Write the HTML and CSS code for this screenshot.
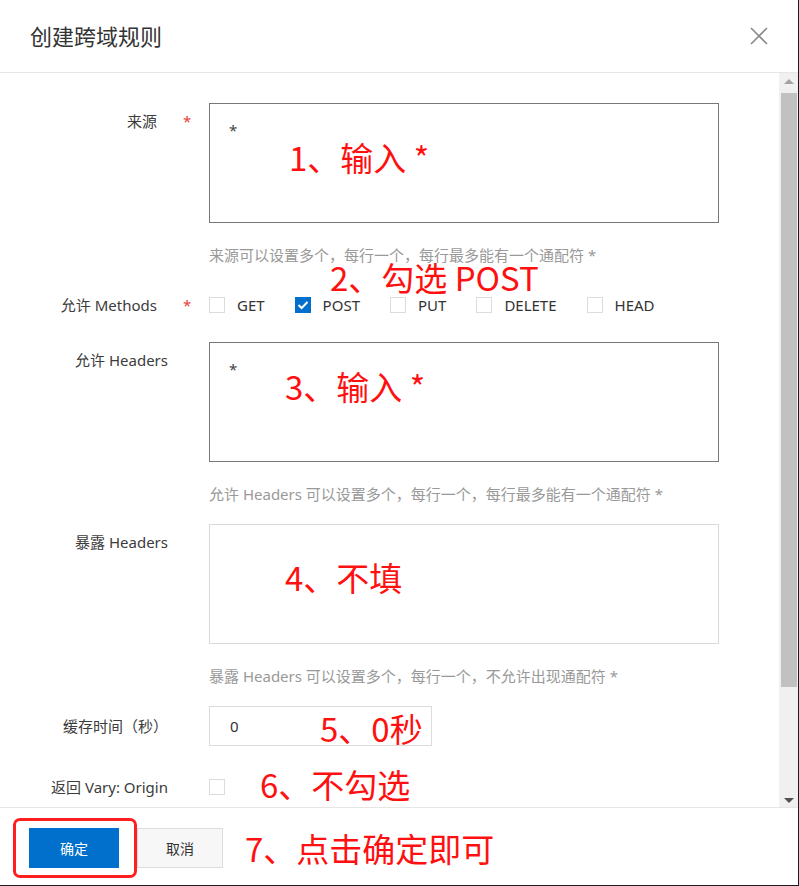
FILE: index.html
```html
<!DOCTYPE html>
<html lang="zh-CN">
<head>
<meta charset="utf-8">
<title>创建跨域规则</title>
<link rel="stylesheet" href="styles.css">
</head>
<body>
<div class="dialog">
  <header class="dlg-head">
    <h1 class="dlg-title">创建跨域规则</h1>
    <button class="dlg-close" aria-label="关闭">
      <svg width="18" height="18" viewBox="0 0 18 18"><path d="M1 1 L17 17 M17 1 L1 17" stroke="#8a8a8a" stroke-width="1.6" fill="none"/></svg>
    </button>
  </header>

  <div class="dlg-body">
    <div class="form">
      <div class="row row-area">
        <div class="label req">来源</div>
        <div class="star">*</div>
        <div class="area area-dark">*</div>
      </div>
      <div class="hint hint-1">来源可以设置多个，每行一个，每行最多能有一个通配符 *</div>

      <div class="row row-check row-methods">
        <div class="label req">允许 Methods</div>
        <div class="star">*</div>
        <div class="checks">
          <label class="check"><span class="box"></span><span>GET</span></label>
          <label class="check"><span class="box checked"><svg width="12" height="10" viewBox="0 0 12 10"><path d="M1.5 5 L4.6 8 L10.5 2" stroke="#fff" stroke-width="2" fill="none"/></svg></span><span>POST</span></label>
          <label class="check"><span class="box"></span><span>PUT</span></label>
          <label class="check"><span class="box"></span><span>DELETE</span></label>
          <label class="check"><span class="box"></span><span>HEAD</span></label>
        </div>
      </div>

      <div class="row row-area row-headers">
        <div class="label">允许 Headers</div>
        <div class="star"></div>
        <div class="area area-dark">*</div>
      </div>
      <div class="hint">允许 Headers 可以设置多个，每行一个，每行最多能有一个通配符 *</div>

      <div class="row row-area row-expose">
        <div class="label">暴露 Headers</div>
        <div class="star"></div>
        <div class="area area-light"></div>
      </div>
      <div class="hint">暴露 Headers 可以设置多个，每行一个，不允许出现通配符 *</div>

      <div class="row row-input">
        <div class="label">缓存时间（秒）</div>
        <div class="star"></div>
        <div class="input">0</div>
      </div>

      <div class="row row-check row-vary">
        <div class="label">返回 Vary: Origin</div>
        <div class="star"></div>
        <span class="box"></span>
      </div>
    </div>

    <div class="scrollbar">
      <div class="sb-btn"><span class="tri-up"></span></div>
      <div class="sb-thumb"></div>
      <div class="sb-space"></div>
      <div class="sb-btn"><span class="tri-down"></span></div>
    </div>
  </div>

  <footer class="dlg-foot">
    <button class="btn btn-primary">确定</button>
    <button class="btn btn-normal">取消</button>
  </footer>

  <div class="mark mark-frame"></div>
  <div class="note n1">1、输入 *</div>
  <div class="note n2">2、勾选 POST</div>
  <div class="note n3">3、输入 *</div>
  <div class="note n4">4、不填</div>
  <div class="note n5">5、0秒</div>
  <div class="note n6">6、不勾选</div>
  <div class="note n7">7、点击确定即可</div>
</div>
</body>
</html>
```

FILE: styles.css
```css
* { box-sizing: border-box; }
html, body { margin: 0; padding: 0; background: #fff; }
body {
  font-family: "Noto Sans", "Noto Sans CJK SC", sans-serif;
  font-size: 15px;
  color: #333;
}
.dialog {
  position: relative;
  width: 799px;
  height: 886px;
  border-right: 1px solid #1c1c1c;
  border-bottom: 1px solid #1c1c1c;
  display: flex;
  flex-direction: column;
  overflow: hidden;
}
.dialog::after {
  content: "";
  position: absolute;
  right: -1px;
  top: 0;
  width: 1px;
  height: 26px;
  background: #c98a2e;
}
.dlg-head {
  height: 73px;
  flex: none;
  border-bottom: 1px solid #e6e6e6;
  display: flex;
  align-items: center;
  justify-content: space-between;
  padding: 0 30px 0 30px;
}
.dlg-title {
  margin: 0;
  font-size: 22px;
  font-weight: normal;
  color: #333;
  font-family: "Noto Sans CJK SC", sans-serif;
  line-height: 28px;
  margin-top: -2px;
}
.dlg-close {
  border: 0;
  background: none;
  padding: 0;
  width: 18px;
  height: 18px;
  margin-top: -1px;
  display: flex;
}
.dlg-body {
  flex: 1;
  display: flex;
  min-height: 0;
}
.form {
  flex: 1;
  padding-top: 30px;
}
.row { display: flex; }
.label {
  width: 168px;
  text-align: right;
  line-height: 20px;
  color: #3c3c3c;
  white-space: nowrap;
}
.label.req { padding-right: 11px; }
.star {
  width: 41px;
  padding-left: 15px;
  color: #e8403a;
  line-height: 20px;
}
.row-area .label, .row-area .star { margin-top: 8px; }
.area {
  width: 510px;
  height: 120px;
  border: 1px solid #777;
  padding: 16px 19px;
  line-height: 20px;
  color: #444;
}
.area.area-light { border-color: #d9d9d9; }
.hint {
  margin-left: 209px;
  margin-top: 22px;
  line-height: 20px;
  color: #999;
  white-space: nowrap;
}
.row-methods { margin-top: 30px; align-items: center; height: 20px; }
.row-headers { margin-top: 27px; }
.row-expose { margin-top: 20px; }
.row-input { margin-top: 20px; align-items: center; }
.row-vary { margin-top: 31px; align-items: center; height: 20px; }
.checks { display: flex; align-items: center; }
.check {
  display: flex;
  align-items: center;
  gap: 12px;
  margin-right: 30px;
  line-height: 20px;
  color: #333;
  font-size: 15px;
}
.box {
  width: 16px;
  height: 16px;
  border: 1px solid #dcdcdc;
  background: #fff;
  display: flex;
  align-items: center;
  justify-content: center;
  flex: none;
}
.box.checked { background: #0070cc; border-color: #0070cc; }
.input {
  width: 223px;
  height: 40px;
  border: 1px solid #dcdcdc;
  padding: 0 20px;
  line-height: 38px;
  color: #333;
}
.scrollbar {
  width: 19px;
  flex: none;
  background: #f0f0f0;
  display: flex;
  flex-direction: column;
  align-items: center;
}
.sb-btn {
  height: 17px;
  width: 100%;
  display: flex;
  align-items: center;
  justify-content: center;
}
.tri-up {
  width: 0; height: 0;
  border-left: 5px solid transparent;
  border-right: 5px solid transparent;
  border-bottom: 5px solid #a3a3a3;
}
.tri-down {
  width: 0; height: 0;
  border-left: 5px solid transparent;
  border-right: 5px solid transparent;
  border-top: 5px solid #505050;
  margin-top: 4px;
}
.sb-thumb {
  margin-top: 3px;
  width: 16px;
  height: 594px;
  background: #c1c1c1;
}
.sb-space { flex: 1; }
.dlg-foot {
  height: 78px;
  flex: none;
  border-top: 1px solid #e6e6e6;
  padding: 20px 0 0 29px;
  display: flex;
  align-items: flex-start;
  gap: 18px;
}
.btn {
  height: 40px;
  font-family: "Noto Sans CJK SC", sans-serif;
  font-size: 14px;
  padding: 0;
  cursor: pointer;
}
.btn-primary {
  width: 90px;
  background: #0070cc;
  border: 1px solid #0070cc;
  color: #fff;
}
.btn-normal {
  width: 86px;
  background: #f7f7f7;
  border: 1px solid #dcdcdc;
  color: #333;
}
.mark-frame {
  position: absolute;
  left: 13px;
  top: 818px;
  width: 124px;
  height: 60px;
  border: 3px solid #ff1f1f;
  border-radius: 7px;
}
.note {
  position: absolute;
  font-family: "Noto Sans CJK SC", sans-serif;
  font-size: 33px;
  line-height: 34px;
  color: #ff1010;
  white-space: nowrap;
}
.n1 { left: 289px; top: 140px; }
.n2 { left: 330px; top: 260px; }
.n3 { left: 285px; top: 369px; }
.n4 { left: 285px; top: 560px; }
.n5 { left: 320px; top: 711px; }
.n6 { left: 260px; top: 767px; }
.n7 { left: 245px; top: 831px; }
```
